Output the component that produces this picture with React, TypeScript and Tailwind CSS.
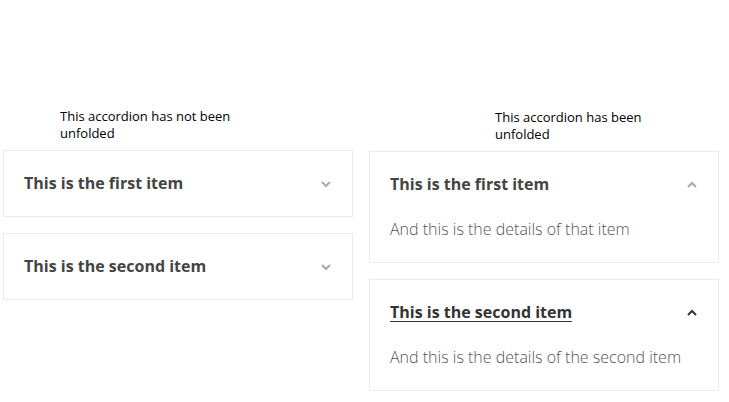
import React from 'react'

type Item = { title: string; details?: string; hover?: boolean }

function Chevron({ up, dark }: { up?: boolean; dark?: boolean }) {
  return (
    <svg width="12" height="12" viewBox="0 0 12 12" className={dark ? 'text-[#333]' : 'text-[#aaa]'}>
      <path
        d={up ? 'M2 8 L6 4 L10 8' : 'M2 4 L6 8 L10 4'}
        fill="none"
        stroke="currentColor"
        strokeWidth="2"
      />
    </svg>
  )
}

function Card({ item, open }: { item: Item; open: boolean }) {
  return (
    <div className="border border-[#ebebeb] bg-white px-5 py-5">
      <div className="flex items-center justify-between">
        <span
          className={
            'text-[16px] leading-[25px] font-bold ' +
            (item.hover ? 'text-[#333] underline underline-offset-[3px]' : 'text-[#444]')
          }
        >
          {item.title}
        </span>
        <Chevron up={open} dark={item.hover} />
      </div>
      {open && item.details && (
        <p className="mt-5 mb-[1px] text-[16px] leading-6 font-light text-[#555]">{item.details}</p>
      )}
    </div>
  )
}

function Column({ caption, indent, items, open }: { caption: string; indent: string; items: Item[]; open: boolean }) {
  return (
    <div className="w-[350px] flex flex-col">
      <p className={'w-[190px] text-[13px] leading-[17px] text-black mb-2 ' + indent}>{caption}</p>
      <div className="flex flex-col gap-4">
        {items.map((it) => (
          <Card key={it.title} item={it} open={open} />
        ))}
      </div>
    </div>
  )
}

export default function App() {
  return (
    <div className="min-h-[402px] bg-white pt-[108px] pl-[3px] flex gap-4" style={{ fontFamily: '"Open Sans", "Noto Sans", sans-serif' }}>
      <Column
        caption="This accordion has not been unfolded"
        indent="ml-[57px]"
        open={false}
        items={[{ title: 'This is the first item' }, { title: 'This is the second item' }]}
      />
      <div className="mt-[1px]">
        <Column
          caption="This accordion has been unfolded"
          indent="ml-[126px]"
          open={true}
          items={[
            { title: 'This is the first item', details: 'And this is the details of that item' },
            { title: 'This is the second item', details: 'And this is the details of the second item', hover: true },
          ]}
        />
      </div>
    </div>
  )
}
